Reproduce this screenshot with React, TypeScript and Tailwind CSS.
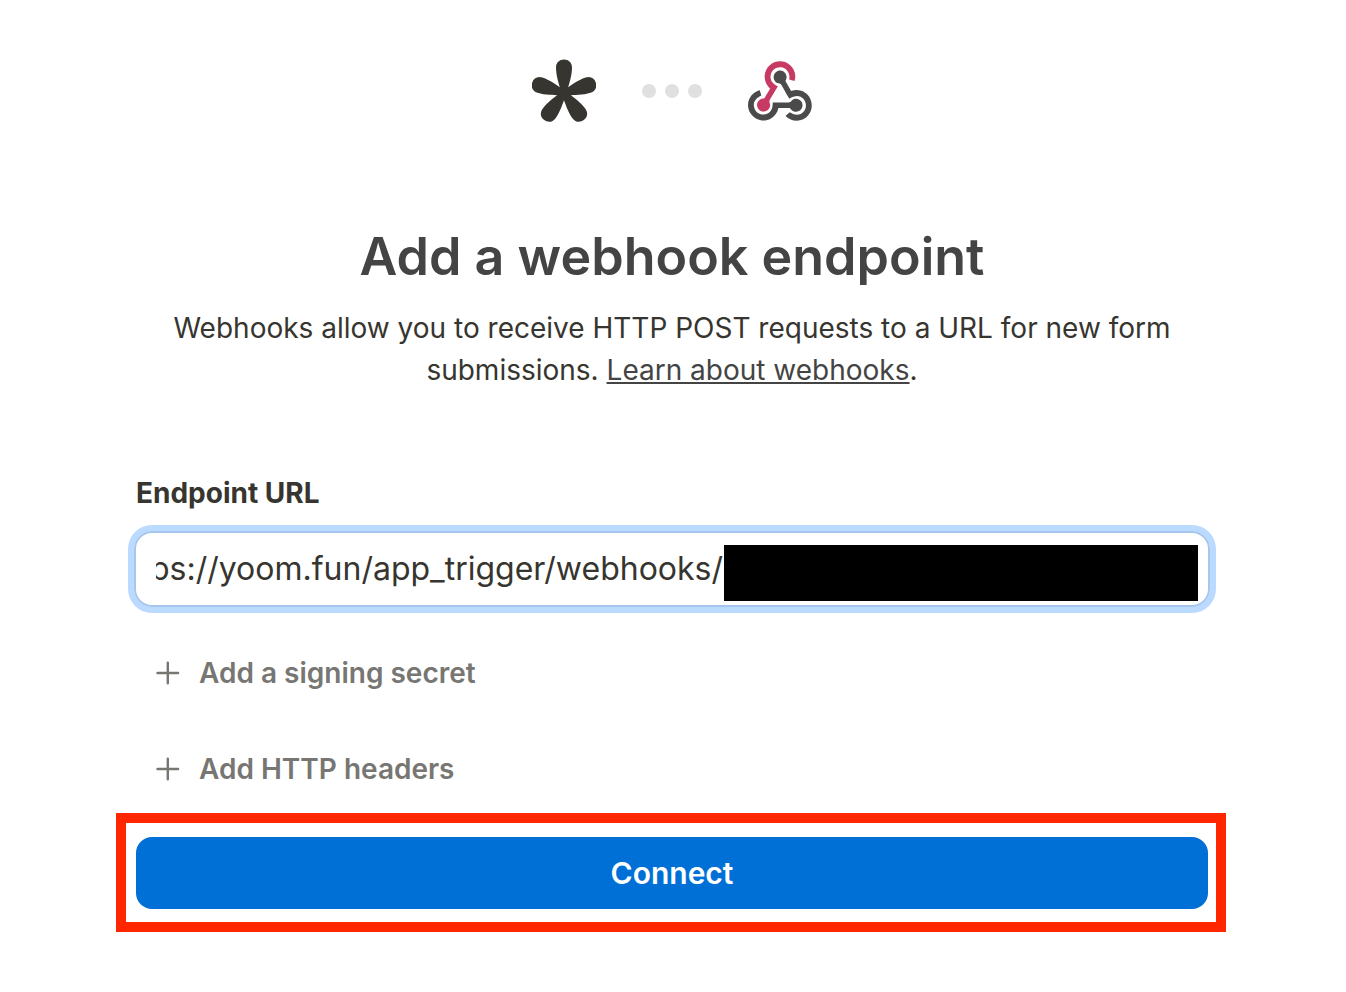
import React from "react";

const PETALS = [0, 72, 144, 216, 288];

function AsteriskLogo() {
  return (
    <svg width="64" height="64" viewBox="-32 -34 64 64" fill="#37352f">
      {PETALS.map((angle) => (
        <path
          key={angle}
          transform={`rotate(${angle})`}
          d="M-3 0L-3.7-4C-5-9-7.9-17-8-25.3C-8-30.5-4.6-33.5 0-33.5S8-30.5 8-25.3C7.9-17 5-9 3.7-4L3 0Z"
        />
      ))}
    </svg>
  );
}

function WebhookLogo() {
  return (
    <svg width="64" height="64" viewBox="0 -8.5 256 256">
      <path
        fill="#C73A63"
        d="M119.54 100.503c-10.61 17.836-20.775 35.108-31.152 52.25-2.665 4.401-3.984 7.986-1.855 13.58 5.878 15.454-2.414 30.493-17.998 34.575-14.697 3.851-29.016-5.808-31.932-21.543-2.584-13.927 8.224-27.58 23.58-29.757 1.286-.184 2.6-.205 4.762-.367l23.358-39.168C73.612 95.465 64.868 78.39 66.803 57.23c1.368-14.957 7.25-27.883 18-38.477 20.59-20.288 52.002-23.573 76.246-8.001 23.284 14.958 33.948 44.094 24.858 69.031-6.854-1.858-13.756-3.732-21.343-5.79 2.854-13.865.743-26.315-8.608-36.981-6.178-7.042-14.106-10.733-23.12-12.093-18.072-2.73-35.815 8.88-41.08 26.618-5.976 20.13 3.069 36.575 27.784 48.967z"
      />
      <path
        fill="#4B4B4B"
        d="M149.841 79.41c7.475 13.187 15.065 26.573 22.587 39.836 38.02-11.763 66.686 9.284 76.97 31.817 12.422 27.219 3.93 59.457-20.465 76.25-25.04 17.238-56.707 14.293-78.892-7.851 5.654-4.733 11.336-9.487 17.407-14.566 21.912 14.192 41.077 13.524 55.305-3.282 12.133-14.337 11.87-35.714-.615-49.75-14.408-16.197-33.707-16.691-57.035-1.143-9.677-17.168-19.522-34.199-28.893-51.491-3.16-5.828-6.648-9.21-13.77-10.443-11.893-2.062-19.571-12.275-20.032-23.717-.453-11.316 6.214-21.545 16.634-25.53 10.322-3.949 22.435-.762 29.378 8.014 5.674 7.17 7.477 15.24 4.491 24.083-.83 2.466-1.905 4.852-3.07 7.774z"
      />
      <path
        fill="#4A4A4A"
        d="M167.707 187.21h-45.77c-4.387 18.044-13.863 32.612-30.19 41.876-12.693 7.2-26.373 9.641-40.933 7.29-26.808-4.323-48.728-28.456-50.658-55.63-2.184-30.784 18.975-58.147 47.178-64.293 1.947 7.071 3.915 14.21 5.862 21.264-25.876 13.202-34.832 29.836-27.59 50.636 6.375 18.304 24.484 28.337 44.147 24.457 20.08-3.962 30.204-20.65 28.968-47.432 19.036 0 38.088-.197 57.126.097 7.434.117 13.173-.654 18.773-7.208 9.22-10.784 26.191-9.811 36.121.374 10.148 10.409 9.662 27.157-1.077 37.127-10.361 9.62-26.73 9.106-36.424-1.26-1.992-2.136-3.562-4.673-5.533-7.298z"
      />
    </svg>
  );
}

function AddButton({ label }: { label: string }) {
  return (
    <button className="flex h-12 items-center gap-[19px] pl-5 text-[28px] font-semibold text-[#777672]">
      <svg
        width="24"
        height="24"
        viewBox="0 0 24 24"
        stroke="currentColor"
        strokeWidth="2.4"
        strokeLinecap="round"
      >
        <path d="M11.8 1.7v20.6M1.5 12h20.6" />
      </svg>
      <span className="whitespace-nowrap">{label}</span>
    </button>
  );
}

export default function App() {
  return (
    <div className="h-[992px] w-[1346px] bg-white pt-[59px] font-['Inter',sans-serif] text-[#37352f]">
      <div className="ml-[136px] w-[1072px]">
        <div className="flex h-16 items-center justify-center gap-[46px]">
          <AsteriskLogo />
          <div className="flex gap-[9.6px]">
            <span className="size-[13.6px] rounded-full bg-[#e0e0e0]" />
            <span className="size-[13.6px] rounded-full bg-[#e0e0e0]" />
            <span className="size-[13.6px] rounded-full bg-[#e0e0e0]" />
          </div>
          <WebhookLogo />
        </div>

        <h1 className="mt-[102px] text-center text-[52px] leading-[64px] font-semibold text-[#444]">
          Add a webhook endpoint
        </h1>
        <p className="mt-[18px] text-center text-[28px] leading-[42px]">
          Webhooks allow you to receive HTTP POST requests to a URL for new form
          <br />
          submissions.{" "}
          <a className="text-[#444] underline decoration-2 underline-offset-2">
            Learn about webhooks
          </a>
          .
        </p>

        <label className="mt-[81px] block text-[28px] leading-[42px] font-bold">
          Endpoint URL
        </label>
        {/* the value is scrolled, so its first letter is cut by the field's padding */}
        <div className="-mx-0.5 mt-[17px] flex h-[76px] items-center rounded-[18px] border-2 border-[#a6c6ee] pl-5 ring-6 ring-[#bbdaff]">
          <div className="flex w-[567px] justify-end overflow-hidden text-[32px] leading-[48px]">
            <span className="whitespace-nowrap">
              ps://yoom.fun/app_trigger/webhooks/
            </span>
          </div>
          <div className="mt-2 ml-[1px] h-14 w-[474px] bg-black" />
        </div>

        <div className="mt-[42px] flex flex-col items-start gap-12">
          <AddButton label="Add a signing secret" />
          <AddButton label="Add HTTP headers" />
        </div>

        <div className="-mr-[18px] -ml-5 mt-5 h-[119px] border-10 border-[#ff2600] pt-[14px] pr-2 pl-[10px]">
          <button className="h-[72px] w-full rounded-2xl bg-[#0070d7] text-[30px] font-semibold text-white">
            Connect
          </button>
        </div>
      </div>
    </div>
  );
}
